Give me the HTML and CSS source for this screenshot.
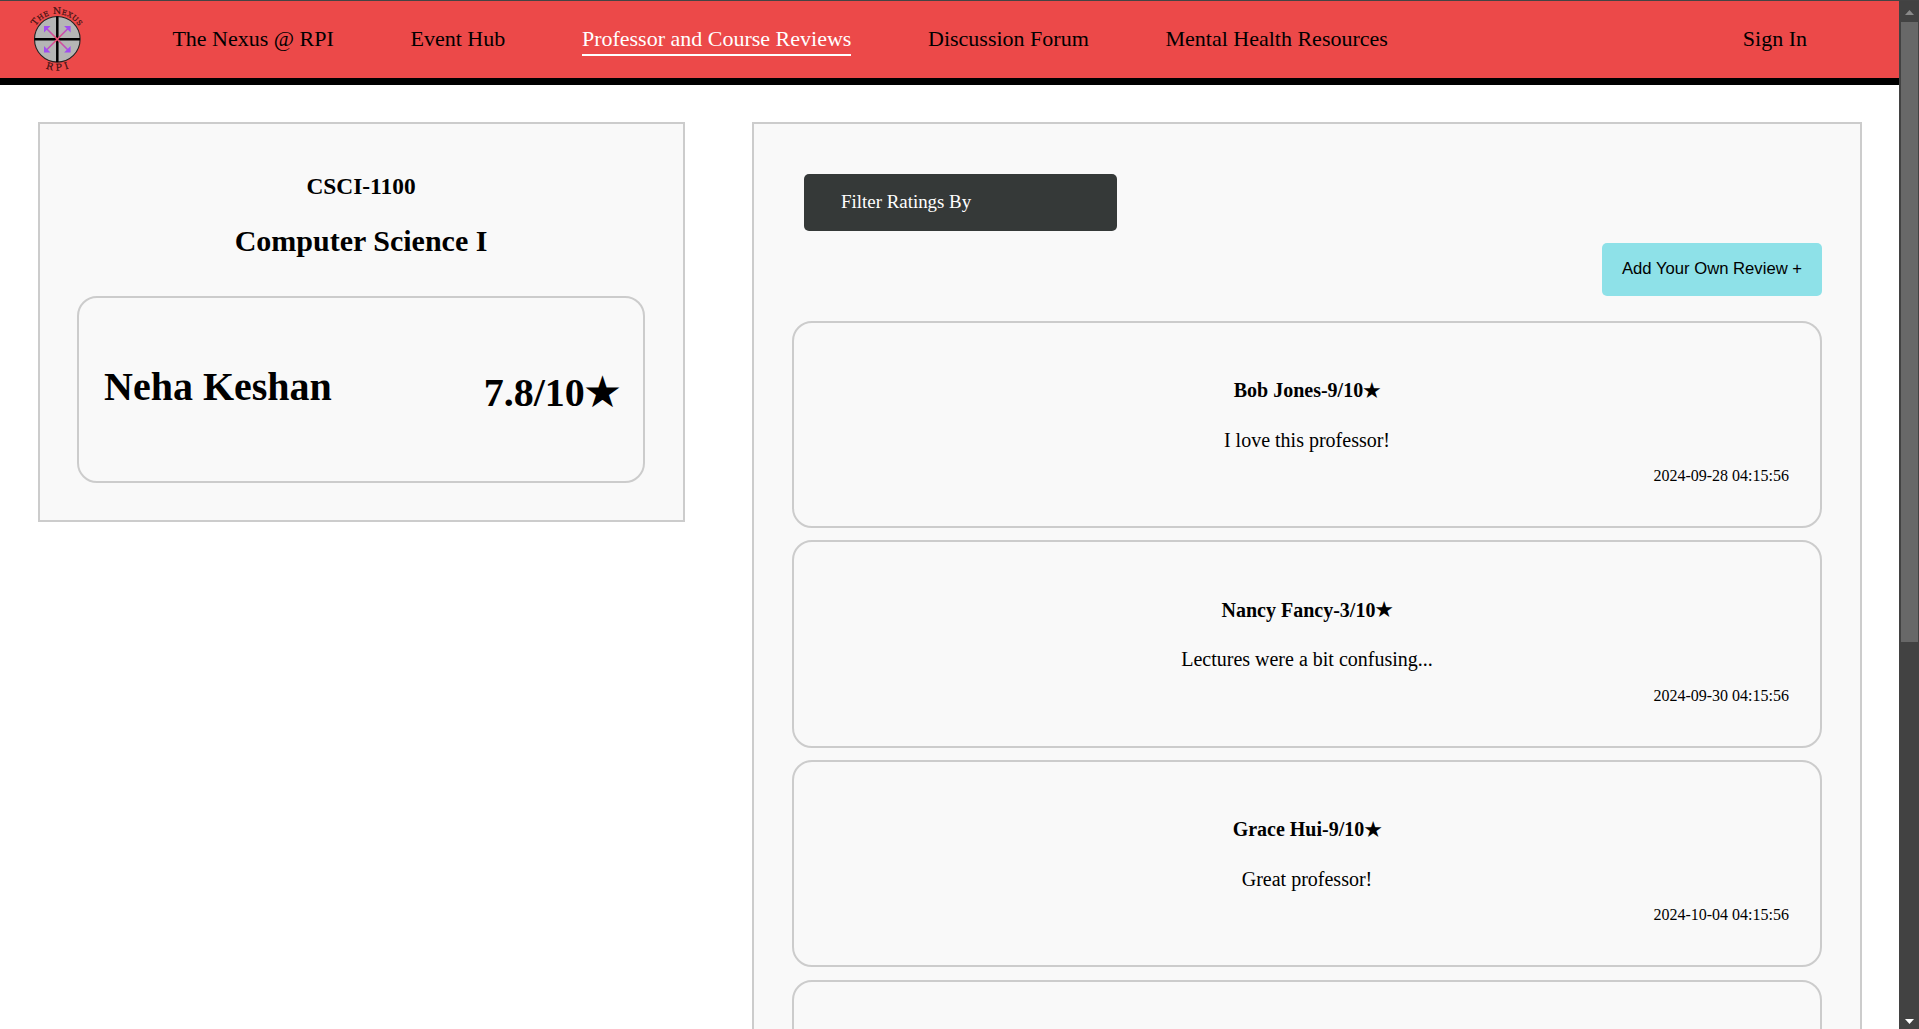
FILE: index.html
```html
<!DOCTYPE html>
<html lang="en">
<head>
<meta charset="utf-8">
<title>Professor and Course Reviews</title>
<link rel="stylesheet" href="styles.css">
</head>
<body>
<div class="page">
  <header class="navbar">
    <svg class="logo" viewBox="0 0 60 76" width="60" height="76" aria-label="The Nexus RPI">
      <defs>
        <path id="arc-top" d="M5.1 38.3A25.2 25.2 0 0 1 55.5 38.3"/>
        <path id="arc-bottom" d="M-1 38.3A31.3 31.3 0 0 0 61.6 38.3"/>
        <linearGradient id="fade" gradientUnits="userSpaceOnUse" x1="17" y1="0" x2="43" y2="0">
          <stop offset="0" stop-color="#a04df0"/><stop offset=".5" stop-color="#f0506a"/><stop offset="1" stop-color="#a04df0"/>
        </linearGradient>
      </defs>
      <circle cx="30.3" cy="38.3" r="22.8" fill="#b5b5b5" stroke="#222" stroke-width="1.1"/>
      <path d="M30.3 15.6V61M7.6 38.3H53" stroke="#000" stroke-width="2.5"/>
      <path d="M18.5 26.5 42 50M42 26.5 18.5 50" stroke="url(#fade)" stroke-width="1.7"/>
      <path d="M17 25h6.5L17 31.5zM43.6 25h-6.5l6.5 6.5zM17 51.5h6.5L17 45zM43.6 51.5h-6.5l6.5-6.5z" fill="#a04df0"/>
      <text class="logo-text"><textPath href="#arc-top" startOffset="50%" text-anchor="middle">The Nexus</textPath></text>
      <text class="logo-text"><textPath href="#arc-bottom" startOffset="50%" text-anchor="middle">R P I</textPath></text>
    </svg>
    <nav class="links">
      <a>The Nexus @ RPI</a>
      <a>Event Hub</a>
      <a class="active">Professor and Course Reviews</a>
      <a>Discussion Forum</a>
      <a>Mental Health Resources</a>
    </nav>
    <a class="signin">Sign In</a>
  </header>
  <main class="content">
    <section class="panel course">
      <h3>CSCI-1100</h3>
      <h2>Computer Science I</h2>
      <div class="card professor">
        <h1>Neha Keshan</h1>
        <h1 class="rating">7.8/10<span class="star">★</span></h1>
      </div>
    </section>
    <section class="panel reviews">
      <div class="filter">Filter Ratings By</div>
      <button class="add">Add Your Own Review +</button>
      <article class="card review"><h4>Bob Jones-9/10<span class="star">★</span></h4><p>I love this professor!</p><time>2024-09-28 04:15:56</time></article>
      <article class="card review"><h4>Nancy Fancy-3/10<span class="star">★</span></h4><p>Lectures were a bit confusing...</p><time>2024-09-30 04:15:56</time></article>
      <article class="card review"><h4>Grace Hui-9/10<span class="star">★</span></h4><p>Great professor!</p><time>2024-10-04 04:15:56</time></article>
      <article class="card review"></article>
    </section>
  </main>
</div>
<div class="scrollbar">
  <svg width="9" height="5" viewBox="0 0 9 5"><path d="M4.5 0 9 5H0z" fill="#898989"/></svg>
  <div class="thumb"></div>
  <svg class="down" width="9" height="5" viewBox="0 0 9 5"><path d="M0 0h9L4.5 5z" fill="#fff"/></svg>
</div>
</body>
</html>
```
FILE: styles.css
```css
* { box-sizing: border-box; }
body {
  margin: 0;
  height: 1029px;
  overflow: hidden;
  display: flex;
  border-top: 1px solid #444;
  background: #fff;
  color: #000;
  font-family: "Liberation Serif", "Times New Roman", serif;
  font-size: 20px;
}
h1, h2, h3, h4, p { margin: 0; }
.page { width: 1899px; height: 1028px; overflow: hidden; }

.navbar {
  display: flex;
  height: 84px;
  padding: 0 92px 0 27px;
  background: #ec4949;
  border-bottom: 7px solid #000;
  font-size: 22px;
  line-height: 26px;
}
.logo { flex: none; overflow: visible; }
.logo-text {
  font: 9.4px "DejaVu Serif", serif;
  font-variant: small-caps;
  letter-spacing: .25px;
  fill: #3a1010;
  stroke: #3a1010;
  stroke-width: .2;
}
.links { display: flex; gap: 76.7px; margin-left: 85.4px; }
.links a, .signin { height: 55px; padding-top: 25px; white-space: nowrap; }
.signin { margin-left: auto; }
.links .active { color: #fff; border-bottom: 2px solid #fff; }

.content { display: flex; align-items: flex-start; gap: 67px; padding: 37px 37px 0 38px; }
.panel { background: #f9f9f9; border: 2px solid #ccc; }
.card { border: 2px solid #ccc; border-radius: 20px; }
.star {
  margin: 0 -.07em 0 -.05em;
  font-family: "DejaVu Sans", sans-serif;
  font-size: 1.1em;
  font-weight: 400;
  line-height: 0;
  vertical-align: -.03em;
}

.course { width: 647px; height: 400px; padding: 48px 38px 0 37px; text-align: center; }
.course h3 { font-size: 23.4px; line-height: 28px; }
.course h2 { margin: 24px 0 38px; font-size: 30px; line-height: 34px; }
.professor { display: flex; justify-content: space-between; height: 187px; padding: 66px 25px 0; }
.professor h1 { height: 60px; font-size: 40px; line-height: 46px; }
.professor .rating { margin-right: -1px; padding-top: 6px; }

.reviews {
  display: flex;
  flex-direction: column;
  width: 1110px;
  height: 1200px;
  padding: 50px 38px 0;
}
.filter {
  flex: none;
  width: 313px;
  height: 57px;
  margin-left: 12px;
  padding: 17px 37px;
  border-radius: 5px;
  background: #353938;
  color: #fff;
  font-size: 18.9px;
  line-height: 22px;
}
.add {
  flex: none;
  align-self: flex-end;
  width: 220px;
  height: 53px;
  margin: 12px 0 24.8px;
  padding: 0 0 1px;
  border: 0;
  border-radius: 5px;
  background: #8ee1e8;
  color: #000;
  font: 16.67px "Liberation Sans", Arial, sans-serif;
}
.review {
  flex: none;
  display: flex;
  flex-direction: column;
  height: 207.4px;
  margin-bottom: 12.2px;
  padding: 55.2px 31px 0;
  text-align: center;
}
.review h4 { height: 24px; font-size: 20px; line-height: 24px; }
.review p { margin: 25.6px 0 14.6px; line-height: 24px; }
.review time { align-self: flex-end; font-size: 16px; line-height: 20px; }

.scrollbar { display: flex; flex-direction: column; align-items: center; width: 20px; padding: 9px 0 5px; background: #424242; }
.thumb { width: 17px; height: 620px; margin-top: 7px; background: #686868; }
.down { margin-top: auto; }
```
